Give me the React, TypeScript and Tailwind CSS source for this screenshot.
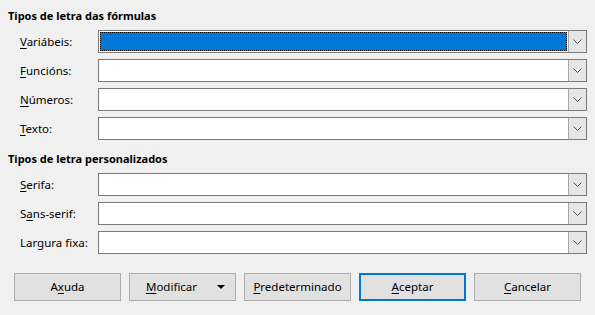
import React from "react";

function Chevron() {
  return (
    <svg width="9" height="5" viewBox="0 0 9 5" className="block">
      <path d="M0.5 0.5 L4.5 4.5 L8.5 0.5" fill="none" stroke="#505050" strokeWidth="1" />
    </svg>
  );
}

function Combo({ selected = false }: { selected?: boolean }) {
  return (
    <div className="flex h-[23px] w-[489px] shrink-0 border border-[#7a7a7a] bg-white">
      <div className="flex-1 p-[1px]">
        {selected ? (
          <div className="h-full w-full bg-[#0078d7] border border-dotted border-black" />
        ) : null}
      </div>
      <div className="flex w-[18px] items-center justify-center border-l border-[#a6a6a6] bg-[#e6e6e6]">
        <Chevron />
      </div>
    </div>
  );
}

function Row({ u, rest, pre = "", selected = false }: { u: string; rest: string; pre?: string; selected?: boolean }) {
  return (
    <div className="flex h-[23px] items-center">
      <div className="w-[90px] shrink-0 whitespace-nowrap pl-[12px] text-[11.5px] text-black">
        {pre}
        <span className="underline underline-offset-2">{u}</span>
        {rest}
      </div>
      <Combo selected={selected} />
    </div>
  );
}

function Btn({ children, focus = false, arrow = false }: { children: React.ReactNode; focus?: boolean; arrow?: boolean }) {
  return (
    <div
      className={
        "relative flex h-[28px] w-[107px] shrink-0 items-center justify-center bg-[#e1e1e1] text-[11.5px] text-black " +
        (focus ? "border-2 border-[#0078d7]" : "border border-[#adadad]")
      }
    >
      {arrow ? (
        <>
          <span className="mr-[22px]">{children}</span>
          <span className="absolute right-[10px] top-[11px] h-0 w-0 border-l-[4px] border-r-[4px] border-t-[4px] border-l-transparent border-r-transparent border-t-black" />
        </>
      ) : (
        children
      )}
    </div>
  );
}

export default function App() {
  return (
    <div
      className="h-[315px] w-[595px] bg-[#f0f0f0] text-black"
      style={{ fontFamily: '"Noto Sans", "Open Sans", sans-serif' }}
    >
      <div className="pl-[8px] pt-[7px]">
        <div className="h-[18px] text-[11px] font-bold leading-[18px]">Tipos de letra das fórmulas</div>
        <div className="mt-[5px] flex flex-col gap-[6px]">
          <Row u="V" rest="ariábeis:" selected />
          <Row u="F" rest="uncións:" />
          <Row u="N" rest="úmeros:" />
          <Row u="T" rest="exto:" />
        </div>
        <div className="mt-[10px] h-[18px] text-[11px] font-bold leading-[18px]">Tipos de letra personalizados</div>
        <div className="mt-[5px] flex flex-col gap-[6px]">
          <Row u="S" rest="erifa:" />
          <Row pre="S" u="a" rest="ns-serif:" />
          <Row pre="Largura f" u="i" rest="xa:" />
        </div>
        <div className="mt-[19px] flex gap-[8px] pl-[6px]">
          <Btn>
            A<span className="underline underline-offset-2">x</span>uda
          </Btn>
          <Btn arrow>
            <span className="underline underline-offset-2">M</span>odificar
          </Btn>
          <Btn>
            <span className="underline underline-offset-2">P</span>redeterminado
          </Btn>
          <Btn focus>
            <span className="underline underline-offset-2">A</span>ceptar
          </Btn>
          <Btn>
            <span className="underline underline-offset-2">C</span>ancelar
          </Btn>
        </div>
      </div>
    </div>
  );
}
